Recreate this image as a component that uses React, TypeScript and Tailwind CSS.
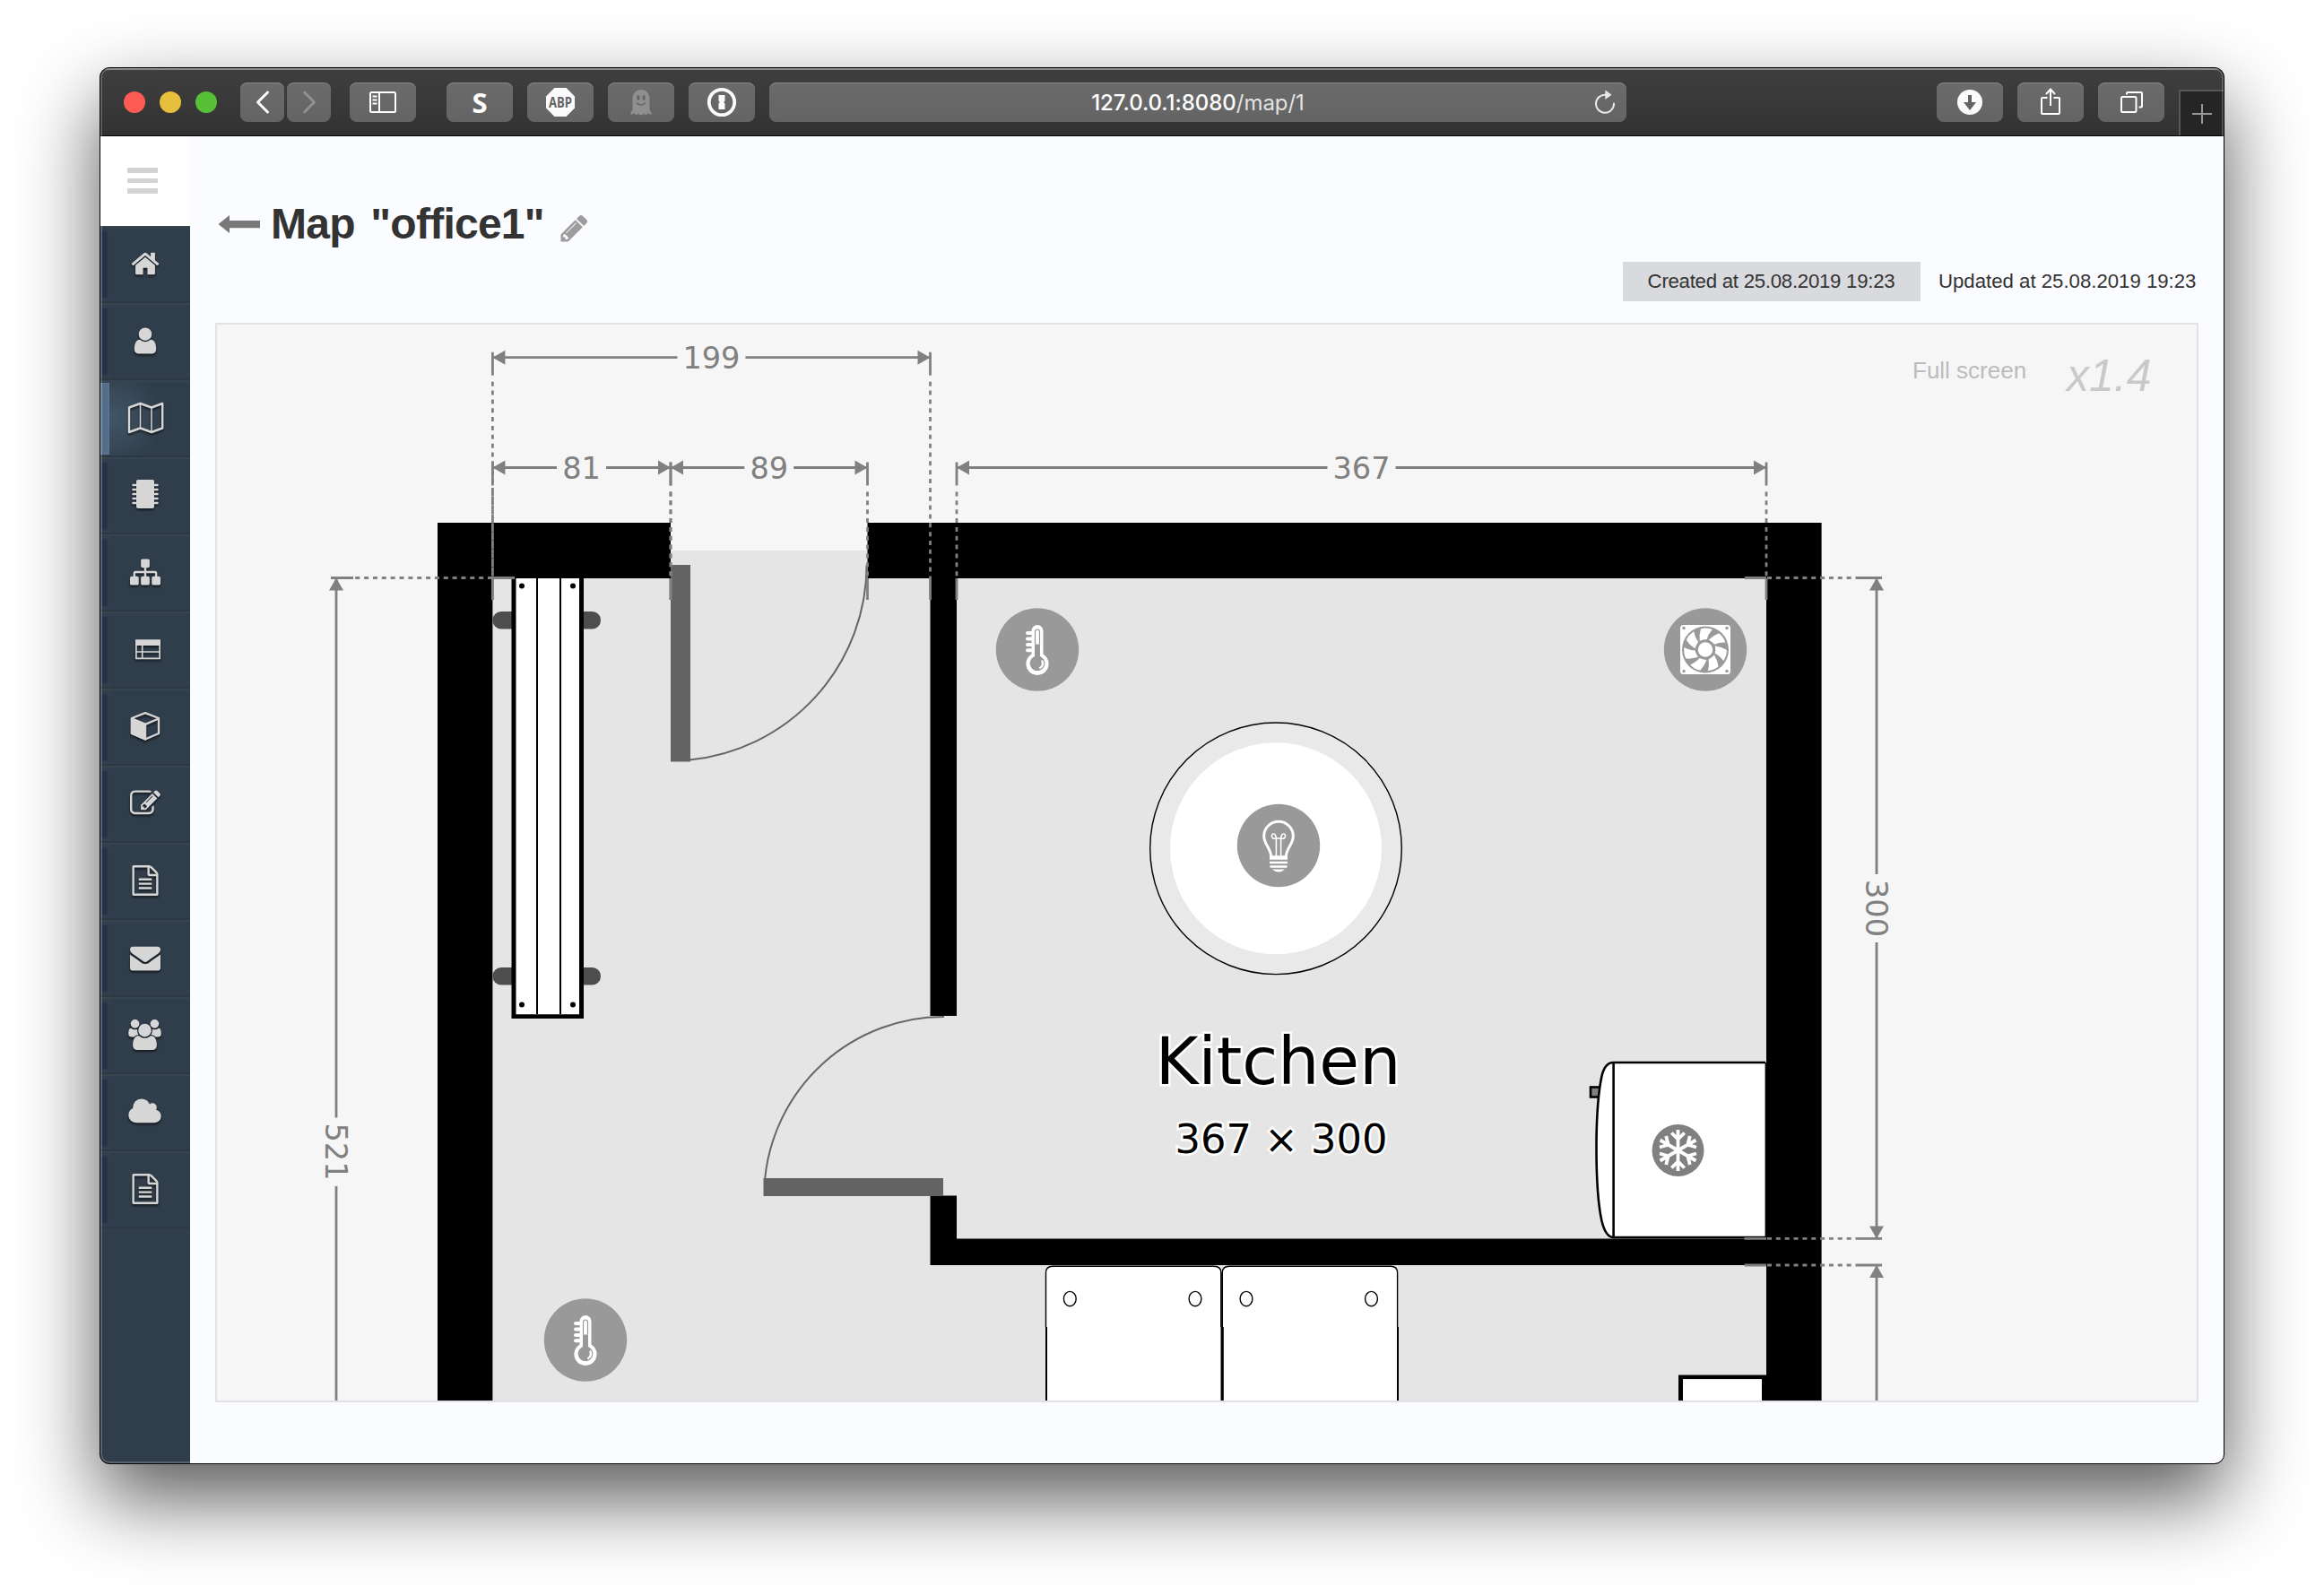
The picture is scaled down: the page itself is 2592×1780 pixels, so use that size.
import React from "react";

const FA = {
  home: "M1472 992v480q0 26-19 45t-45 19h-384v-384h-256v384h-384q-26 0-45-19t-19-45v-480q0-1 .5-3t.5-3l575-474 575 474q1 2 1 6zm223-69l-62 74q-8 9-21 11h-3q-13 0-21-7l-692-577-692 577q-12 8-24 7-13-2-21-11l-62-74q-8-10-7-23.5t11-21.5l719-599q32-26 76-26t76 26l244 204v-195q0-14 9-23t23-9h192q14 0 23 9t9 23v408l219 182q10 8 11 21.5t-7 23.5z",
  user: "M1536 1399q0 109-62.5 187t-150.5 78h-854q-88 0-150.5-78t-62.5-187q0-85 8.5-160.5t31.5-152 58.5-131 94-89 134.5-34.5q131 128 313 128t313-128q76 0 134.5 34.5t94 89 58.5 131 31.5 152 8.5 160.5zm-256-887q0 159-112.5 271.5t-271.5 112.5-271.5-112.5-112.5-271.5 112.5-271.5 271.5-112.5 271.5 112.5 112.5 271.5z",
  sitemap: "M1792 1248v320q0 40-28 68t-68 28h-320q-40 0-68-28t-28-68v-320q0-40 28-68t68-28h96v-192h-512v192h96q40 0 68 28t28 68v320q0 40-28 68t-68 28h-320q-40 0-68-28t-28-68v-320q0-40 28-68t68-28h96v-192h-512v192h96q40 0 68 28t28 68v320q0 40-28 68t-68 28h-320q-40 0-68-28t-28-68v-320q0-40 28-68t68-28h96v-192q0-52 38-90t90-38h512v-192h-96q-40 0-68-28t-28-68v-320q0-40 28-68t68-28h320q40 0 68 28t28 68v320q0 40-28 68t-68 28h-96v192h512q52 0 90 38t38 90v192h96q40 0 68 28t28 68z",
  edit: "M888 1184l116-116-152-152-116 116v56h96v96h56zm440-720q-16-16-33 1l-350 350q-17 17-1 33t33-1l350-350q17-17 1-33zm80 594v190q0 119-84.5 203.5t-203.5 84.5h-832q-119 0-203.5-84.5t-84.5-203.5v-832q0-119 84.5-203.5t203.5-84.5h832q63 0 117 25 15 7 18 23 3 17-9 29l-49 49q-14 14-32 8-23-6-45-6h-832q-66 0-113 47t-47 113v832q0 66 47 113t113 47h832q66 0 113-47t47-113v-126q0-13 9-22l64-64q15-15 35-7t20 29zm-96-738l288 288-672 672h-288v-288zm444 132l-92 92-288-288 92-92q28-28 68-28t68 28l152 152q28 28 28 68t-28 68z",
  file: "M1596 380q28 28 48 76t20 88v1152q0 40-28 68t-68 28h-1344q-40 0-68-28t-28-68v-1600q0-40 28-68t68-28h896q40 0 88 20t76 48zm-444-244v376h376q-10-29-22-41l-313-313q-12-12-41-22zm384 1528v-1024h-416q-40 0-68-28t-28-68v-416h-768v1536h1280zm-1024-864q0-14 9-23t23-9h704q14 0 23 9t9 23v64q0 14-9 23t-23 9h-704q-14 0-23-9t-9-23v-64zm736 224q14 0 23 9t9 23v64q0 14-9 23t-23 9h-704q-14 0-23-9t-9-23v-64q0-14 9-23t23-9h704zm0 256q14 0 23 9t9 23v64q0 14-9 23t-23 9h-704q-14 0-23-9t-9-23v-64q0-14 9-23t23-9h704z",
  mail: "M1792 710v794q0 66-47 113t-113 47h-1472q-66 0-113-47t-47-113v-794q44 49 101 87 362 246 497 345 57 42 92.5 65.5t94.5 48 110 24.5h2q51 0 110-24.5t94.5-48 92.5-65.5q170-123 498-345 57-39 100-87zm0-294q0 79-49 151t-122 123q-376 261-468 325-10 7-42.5 31t-54 38.5-52 32.5-57.5 27-50 9h-2q-23 0-50-9t-57.5-27-52-32.5-54-38.5-42.5-31q-91-64-262-182.5t-205-142.5q-62-42-117-115.5t-55-136.5q0-78 41.5-130t118.5-52h1472q65 0 112.5 47t47.5 113z",
  users: "M657 896q-162 5-265 128h-134q-82 0-138-40.5t-56-118.5q0-353 124-353 6 0 43.5 21t97.5 42.5 119 21.5q67 0 133-23-5 37-5 66 0 139 81 256zm1071 637q0 120-73 189.5t-194 69.5h-874q-121 0-194-69.5t-73-189.5q0-53 3.5-103.5t14-109 26.5-108.5 43-97.5 62-81 85.5-53.5 111.5-20q10 0 43 21.5t73 48 107 48 135 21.5 135-21.5 107-48 73-48 43-21.5q61 0 111.5 20t85.5 53.5 62 81 43 97.5 26.5 108.5 14 109 3.5 103.5zm-1024-1277q0 106-75 181t-181 75-181-75-75-181 75-181 181-75 181 75 75 181zm704 384q0 159-112.5 271.5t-271.5 112.5-271.5-112.5-112.5-271.5 112.5-271.5 271.5-112.5 271.5 112.5 112.5 271.5zm576 225q0 78-56 118.5t-138 40.5h-134q-103-123-265-128 81-117 81-256 0-29-5-66 66 23 133 23 59 0 119-21.5t97.5-42.5 43.5-21q124 0 124 353zm-128-609q0 106-75 181t-181 75-181-75-75-181 75-181 181-75 181 75 75 181z",
  cloud: "M1984 1152q0 159-112.5 271.5t-271.5 112.5h-1088q-185 0-316.5-131.5t-131.5-316.5q0-132 71-241.5t187-163.5q-2-28-2-43 0-212 150-362t362-150q158 0 286.5 88t187.5 230q70-62 166-62 106 0 181 75t75 181q0 75-41 138 129 30 213 134.5t84 239.5z",
  pencil: "M491 1536l91-91-235-235-91 91v107h128v128h107zm523-928q0-22-22-22-10 0-17 7l-542 542q-7 7-7 17 0 22 22 22 10 0 17-7l542-542q7-7 7-17zm-54-192l416 416-832 832h-416v-416zm683 96q0 53-37 90l-166 166-416-416 166-165q36-38 90-38 53 0 91 38l235 234q37 39 37 91z",
};

function Glyph({ d, wide = false }: { d: string; wide?: boolean }) {
  return wide ? (
    <svg className="h-[34px] w-[39px] fill-current" viewBox="0 0 2048 1792">
      <path d={d} />
    </svg>
  ) : (
    <svg className="size-[34px] fill-current" viewBox="0 0 1792 1792">
      <path d={d} />
    </svg>
  );
}

const MapGlyph = () => (
  <svg className="h-[36px] w-[42px]" viewBox="0 0 42 36" fill="none" stroke="currentColor" strokeWidth="2.400" strokeLinejoin="round">
    <path d="M3 6.500 15.500 2 28 6.500 40.200 2V29.500L28 34 15.500 29.500 3 34Z" />
    <path d="M15.500 2V29.500M28 6.500V34" strokeWidth="1.500" />
  </svg>
);

const ChipGlyph = () => (
  <svg className="mb-[2px] h-[34px] w-[30px]" viewBox="0 0 30 34" fill="currentColor">
    <rect x="5" y="1" width="20" height="32" rx="2" />
    {[7, 12, 17, 22, 27].map((y) => (
      <path key={y} d={`M1.500 ${y}H4M26 ${y}h2.500`} stroke="currentColor" strokeWidth="2.400" strokeLinecap="round" />
    ))}
  </svg>
);

const TableGlyph = () => (
  <svg className="ml-[7px] h-[24px] w-[30px]" viewBox="0 0 30 24" fill="none" stroke="currentColor" strokeWidth="1.700">
    <path d="M1 1.500H29V8H1Z" fill="currentColor" stroke="none" />
    <path d="M1.900 2.400H28.100V22.300H1.900ZM2 15H28M8.700 8V22" />
  </svg>
);

const CubeGlyph = () => (
  <svg className="h-[34px] w-[34px]" viewBox="0 0 34 34" fill="none" stroke="currentColor" strokeWidth="2.400" strokeLinejoin="round">
    <path d="M2 8 17 2.200 32 8V25L17 31.500 2 25Z" />
    <path d="M2 8.500 17 14.800 32 8.500" />
    <path d="M2 8.500 17 14.800V31.500L2 25Z" fill="currentColor" />
  </svg>
);

const NAV: { name: string; icon: React.ReactNode }[] = [
  { name: "home", icon: <Glyph d={FA.home} /> },
  { name: "user", icon: <Glyph d={FA.user} /> },
  { name: "map", icon: <MapGlyph /> },
  { name: "chip", icon: <ChipGlyph /> },
  { name: "flow", icon: <Glyph d={FA.sitemap} /> },
  { name: "table", icon: <TableGlyph /> },
  { name: "cube", icon: <CubeGlyph /> },
  { name: "edit", icon: <Glyph d={FA.edit} /> },
  { name: "docs", icon: <Glyph d={FA.file} /> },
  { name: "mail", icon: <Glyph d={FA.mail} /> },
  { name: "users", icon: <Glyph d={FA.users} wide /> },
  { name: "cloud", icon: <Glyph d={FA.cloud} wide /> },
  { name: "logs", icon: <Glyph d={FA.file} /> },
];

function ToolButton({ className = "w-[74px]", children }: { className?: string; children?: React.ReactNode }) {
  return (
    <div
      className={`flex h-[44px] shrink-0 items-center justify-center rounded-[8px] bg-gradient-to-b from-[#6b6b6b] to-[#646464] text-white shadow-[inset_0_1px_0_#858585] ${className}`}
    >
      {children}
    </div>
  );
}

function TitleBar() {
  return (
    <div className="relative flex h-[76px] shrink-0 items-start border-b border-black bg-gradient-to-b from-[#3f3f3f] to-[#323232] pt-[16px] shadow-[inset_0_2px_0_#6f6f6f]">
      <div className="ml-[26px] flex h-[44px] gap-[16px] pt-[10px]">
        <span className="size-6 rounded-full bg-[#ff5b55]" />
        <span className="size-6 rounded-full bg-[#e6bf3c]" />
        <span className="size-6 rounded-full bg-[#58c038]" />
      </div>
      <ToolButton className="ml-[26px] w-[49px]">
        <svg className="h-[28px] w-[18px]" viewBox="0 0 18 28" fill="none" stroke="currentColor" strokeWidth="3" strokeLinecap="round" strokeLinejoin="round">
          <path d="M14.500 3 3.500 14l11 11" />
        </svg>
      </ToolButton>
      <ToolButton className="ml-[3px] w-[49px]">
        <svg className="h-[28px] w-[18px] text-[#939393]" viewBox="0 0 18 28" fill="none" stroke="currentColor" strokeWidth="2.600" strokeLinecap="round" strokeLinejoin="round">
          <path d="m3.500 3 11 11-11 11" />
        </svg>
      </ToolButton>
      <ToolButton className="ml-[21px] w-[74px]">
        <svg className="h-[26px] w-[32px]" viewBox="0 0 32 26" fill="none" stroke="currentColor" strokeWidth="2">
          <rect x="2" y="2" width="28" height="22" rx="1.500" />
          <path d="M12 2V24M4.500 6.500h5M4.500 10.500h5M4.500 14.500h5" />
        </svg>
      </ToolButton>
      <ToolButton className="ml-[34px] w-[74px]">
        <span className="font-['Open_Sans'] text-[31px] leading-none font-bold">S</span>
      </ToolButton>
      <ToolButton className="ml-[16px] w-[74px]">
        <svg className="size-[34px]" viewBox="0 0 34 34">
          <path d="M10.400 1H23.600L33 10.400V23.600L23.600 33H10.400L1 23.600V10.400Z" fill="#fbfbfb" />
          <text x="4" y="22.500" fontSize="15.500" fontWeight="700" fill="#636363" fontFamily="Open Sans" textLength="26" lengthAdjust="spacingAndGlyphs">ABP</text>
        </svg>
      </ToolButton>
      <ToolButton className="ml-[16px] w-[74px]">
        <svg className="h-[30px] w-[26px]" viewBox="0 0 26 30">
          <path d="M13 1c6 0 9.500 4.500 9.500 10.500V23l2.500 5c-2 1.200-3 .2-4.200-1-1.500 2.400-3.300 2.800-4.500.6-1.200 2.400-5.400 2.400-6.600 0-1.200 2.200-3 1.800-4.500-.6C4 28.200 3 29.200 1 28l2.500-5V11.500C3.500 5.500 7 1 13 1Z" fill="#8f8f8f" />
          <ellipse cx="9.900" cy="10" rx="1.600" ry="3" fill="#666" />
          <ellipse cx="16.100" cy="10" rx="1.600" ry="3" fill="#666" />
          <path d="M8 15.500q5 5.500 10 0" fill="none" stroke="#666" strokeWidth="1.700" />
        </svg>
      </ToolButton>
      <ToolButton className="ml-[16px] w-[74px]">
        <svg className="size-[34px]" viewBox="0 0 34 34" fill="none">
          <circle cx="17" cy="17" r="14.200" stroke="#fbfbfb" strokeWidth="3.800" />
          <path d="M13.500 9h7v6.500l-1.400 1.500 1.400 1.500V25h-7v-6.500l1.400-1.500-1.400-1.500Z" fill="#fbfbfb" />
        </svg>
      </ToolButton>
      <ToolButton className="relative ml-[16px] w-[956px] rounded-[7px]">
        <span className="mt-[2px] font-['Inter'] text-[24px] font-medium tracking-[-0.03px] text-white">
          127.0.0.1:8080<span className="font-normal text-[#e2e2e2]">/map/1</span>
        </span>
        <svg className="absolute top-[8px] right-[11px] h-[28px] w-[26px] text-[#e8e8e8]" viewBox="0 0 26 28" fill="none" stroke="currentColor" strokeWidth="2">
          <path d="M14 5.800A10 10 0 1 0 23 15.600" strokeLinecap="round" />
          <path d="M13.300 0.500 20.500 5.800 13.300 11Z" fill="currentColor" stroke="none" />
        </svg>
      </ToolButton>
      <ToolButton className="ml-[346px] w-[74px]">
        <svg className="size-[30px]" viewBox="0 0 30 30">
          <circle cx="15" cy="15" r="14" fill="#fbfbfb" />
          <path d="M13 7h4v8h5l-7 9-7-9h5Z" fill="#636363" />
        </svg>
      </ToolButton>
      <ToolButton className="ml-[16px] w-[74px]">
        <svg className="mb-[2px] h-[32px] w-[24px]" viewBox="0 0 24 32" fill="none" stroke="currentColor" strokeWidth="2">
          <path d="M8.500 12H3a1 1 0 0 0-1 1V29a1 1 0 0 0 1 1H21a1 1 0 0 0 1-1V13a1 1 0 0 0-1-1H15.500M12 21V2.500M7 8l5-5.500L17 8" />
        </svg>
      </ToolButton>
      <ToolButton className="ml-[16px] w-[74px]">
        <svg className="h-[26px] w-[26px]" viewBox="0 0 26 26" fill="none" stroke="currentColor" strokeWidth="2">
          <rect x="2" y="7" width="16.500" height="17" rx="1.500" />
          <path d="M8 4.500V3a1 1 0 0 1 1-1H24a1 1 0 0 1 1 1V17.500a1 1 0 0 1-1 1H21.500" />
        </svg>
      </ToolButton>
      <div className="mt-[8px] ml-[16px] flex h-[51px] min-w-0 flex-1 items-center justify-center border-t-2 border-l-2 border-[#575757] bg-[#252525]">
        <svg className="size-[22px]" viewBox="0 0 22 22" stroke="#979797" strokeWidth="2">
          <path d="M11 0V22M0 11H22" />
        </svg>
      </div>
    </div>
  );
}

function Sidebar() {
  return (
    <nav className="flex w-[100px] shrink-0 flex-col bg-[#303d4a]">
      <div className="flex h-[100px] flex-col gap-[6px] bg-white pt-[35px] pl-[30px]">
        <span className="h-[5.500px] w-[34px] rounded-[1px] bg-[#d3d3d3]" />
        <span className="h-[5.500px] w-[34px] rounded-[1px] bg-[#d3d3d3]" />
        <span className="h-[5.500px] w-[34px] rounded-[1px] bg-[#d3d3d3]" />
      </div>
      {NAV.map(({ name, icon }) => (
        <div
          key={name}
          className={`flex h-[86px] items-center border-t-2 border-b-2 border-t-[#36444f] border-b-[#2c3945] ${
            name === "map" ? "bg-[radial-gradient(circle_at_12px_40px,#415666,#303d4a_58px)]" : ""
          }`}
        >
          <span
            className={`h-[80px] w-[10px] ${
              name === "map" ? "bg-[#546d88] shadow-[inset_0_0_3px_#6c87a0]" : "bg-[#252e46] shadow-[inset_0_0_4px_1px_#3c4c5a]"
            }`}
          />
          <span className="flex w-[79px] items-center justify-center pb-[3px] text-[#d6d6d6] drop-shadow-[0_2px_1px_rgba(0,0,0,0.6)]">{icon}</span>
        </div>
      ))}
    </nav>
  );
}

type Dim = { from: number; to: number; at: number; wall: number; label: string; gap: number; mid?: number };

const TOP_DIMS: Dim[] = [
  { from: 549.4, to: 1037.5, at: 398.7, wall: 645, label: "199", gap: 76 },
  { from: 549.4, to: 748, at: 521.5, wall: 645, label: "81", gap: 55, mid: 648.5 },
  { from: 748, to: 967.5, at: 521.5, wall: 645, label: "89", gap: 55 },
  { from: 1067, to: 1970, at: 521.5, wall: 645, label: "367", gap: 76 },
];

function HorizontalDim({ from, to, at, wall, label, gap, mid }: Dim) {
  const m = mid ?? (from + to) / 2;
  return (
    <g stroke="#808080" strokeWidth="2.800" fill="none">
      <path d={`M${from} ${at}H${m - gap / 2}M${m + gap / 2} ${at}H${to}`} />
      <path d={`M${from} ${at}l14 -8v16ZM${to} ${at}l-14 -8v16Z`} fill="#808080" stroke="none" />
      {[from, to].map((x) => (
        <g key={x}>
          <path d={`M${x} ${at - 6}V${at + 20}M${x} ${wall}V${wall + 24}`} />
          <path d={`M${x} ${at + 27}V${wall}`} strokeDasharray="5 4.850" />
        </g>
      ))}
      <text x={m} y={at + 12} textAnchor="middle" fontSize="33.600" fill="#808080" stroke="none">{label}</text>
    </g>
  );
}

function Thermometer({ x, y }: { x: number; y: number }) {
  return (
    <g transform={`translate(${x} ${y})`}>
      <circle r="46.200" fill="#999" />
      <path d="M-6.500 -21a6.500 6.500 0 0 1 13 0V5a12.600 12.600 0 1 1 -13 0Z" fill="#fff" />
      <path d="M-6 -18.500h-5M-6 -12h-5M-6 -5.500h-5M-6 .8h-5" stroke="#fff" strokeWidth="4" strokeLinecap="round" />
      <path d="M-2.500 -6V-20a2.500 2.500 0 0 1 5 0V-6" fill="none" stroke="#999" strokeWidth="1.200" />
      <path d="M-3 -6h6V7.500a8.300 8.300 0 1 1 -6 0Z" fill="#999" />
      <path d="M5.500 13q1.600 4.800-2.300 7.300" fill="none" stroke="#fff" strokeWidth="2.400" strokeLinecap="round" />
    </g>
  );
}

function Fan({ x, y }: { x: number; y: number }) {
  return (
    <g transform={`translate(${x} ${y})`}>
      <circle r="46.200" fill="#999" />
      <rect x="-28" y="-27.500" width="56" height="55" rx="3.500" fill="#fff" />
      {[[-24, -24], [24, -24], [-24, 24], [24, 24]].map(([cx, cy]) => (
        <circle key={`${cx}${cy}`} cx={cx} cy={cy} r="1.700" fill="#999" />
      ))}
      <circle r="26" fill="#999" />
      {[0, 1, 2, 3, 4, 5, 6].map((i) => (
        <path key={i} d="M-6.300 -9.800Q-7 -17 -5 -23.200Q1 -25 7.800 -22.500Q3 -17 1.800 -11.500Q-2 -11.500 -6.300 -9.800Z" fill="#fff" transform={`rotate(${(i * 360) / 7})`} />
      ))}
      <circle r="8.200" fill="#fff" />
    </g>
  );
}

function Bulb({ x, y }: { x: number; y: number }) {
  return (
    <g transform={`translate(${x} ${y})`} fill="none" stroke="#fff">
      <circle r="46.200" fill="#999" stroke="none" />
      <path d="M-8.300 12C-9 2-16.300-1-16.300-10.500a16.300 16.300 0 0 1 32.600 0C16.300-1 9 2 8.300 12" strokeWidth="3" />
      <path d="M-2.600 12V-6C-2.600-11-4-13.500-6-13-9-12-7.500-6.500-3.500-8H3.500C7.500-6.500 9-12 6-13 4-13.500 2.600-11 2.600-6V12" strokeWidth="1.600" />
      <path d="M-10 13.500H10" strokeWidth="4.500" />
      <path d="M-10 19H10M-9.500 23.500H9.500" strokeWidth="2.600" />
      <path d="M-7 26.500H7Q4 29.500 0 29.500T-7 26.500Z" fill="#fff" stroke="none" />
    </g>
  );
}

function Snowflake({ x, y }: { x: number; y: number }) {
  return (
    <g transform={`translate(${x} ${y})`} stroke="#fff" strokeWidth="3.800" fill="none">
      <circle r="29" fill="#808080" stroke="none" />
      {[0, 60, 120, 180, 240, 300].map((a) => (
        <path key={a} d="M0 0V-23M-7.200 -19.500 0 -12.500 7.200 -19.500" transform={`rotate(${a})`} />
      ))}
    </g>
  );
}

function FloorPlan() {
  return (
    <svg className="block h-full w-full font-['DejaVu_Sans']" viewBox="242 362 2208 1200">
      <path d="M549 645H748V614H967.500V645H1970V1562H549Z" fill="#e5e5e5" />

      {/* walls */}
      <g fill="#000">
        <path d="M488 583H748V645H549.400V1562H488Z" />
        <path d="M967.500 583H2031.600V1562H1970V645H1067V1133H1037.500V645H967.500Z" />
        <path d="M1037.500 1333.500H1067V1381.500H1970V1411H1037.500Z" />
      </g>

      {/* hallway bench */}
      <g>
        <g fill="#4d4d4d">
          <rect x="549.500" y="682" width="120.500" height="19.500" rx="9.500" />
          <rect x="549.500" y="1079" width="120.500" height="19.500" rx="9.500" />
        </g>
        <path d="M570.500 645H651V1136H570.500Z" />
        <path d="M575.500 645H646V1131.300H575.500Z" fill="#fff" />
        <path d="M599 645V1131M625 645V1131" stroke="#000" strokeWidth="2" />
        <circle cx="582" cy="653.500" r="3" />
        <circle cx="639" cy="653.500" r="3" />
        <circle cx="582" cy="1120.500" r="3" />
        <circle cx="639" cy="1120.500" r="3" />
      </g>

      {/* doors */}
      <g fill="none" stroke="#666" strokeWidth="2">
        <path d="M966.600 630A218.600 218.600 0 0 1 769 847.500" />
        <rect x="748" y="630" width="22" height="219.500" fill="#636363" stroke="none" />
        <path d="M1053 1134A200.500 200.500 0 0 0 853 1316" />
        <rect x="851.500" y="1314" width="200.500" height="20" fill="#636363" stroke="none" />
      </g>

      {/* ceiling lamp */}
      <circle cx="1423" cy="946.300" r="140.300" fill="#e9e9e9" stroke="#000" strokeWidth="1.400" />
      <circle cx="1423" cy="946.300" r="118" fill="#fff" />

      {/* fridge */}
      <g stroke="#000" strokeWidth="2.600">
        <rect x="1774" y="1212.500" width="12" height="11" fill="#808080" />
        <path d="M1969 1185H1799.500Q1790 1185 1786.500 1200Q1780.500 1228 1780.500 1280Q1780.500 1335 1786.500 1362Q1791 1380 1799.500 1380H1969" fill="#fff" />
        <path d="M1799.600 1185V1380" />
        <path d="M1969.300 1185V1380" strokeWidth="1.400" />
      </g>
      <Snowflake x={1871.5} y={1283} />

      {/* cabinets below the kitchen */}
      <g fill="#fff" stroke="#000" strokeWidth="1.400">
        <path d="M1166.500 1480V1419.500Q1166.500 1412.300 1174 1412.300H1354Q1361.800 1412.300 1361.800 1419.500V1480M1363.300 1480V1419.500Q1363.300 1412.300 1371 1412.300H1551Q1558.600 1412.300 1558.600 1419.500V1480" />
        <path d="M1167 1480V1564H1362.500V1480M1363.800 1480V1564H1559V1480" strokeWidth="2" />
        {[1193.3, 1333, 1390, 1529.5].map((cx) => (
          <ellipse key={cx} cx={cx} cy="1448.600" rx="6.900" ry="8.200" />
        ))}
      </g>
      <path d="M1872 1533.500H1970V1562H1965V1538.300H1877V1562H1872Z" />
      <path d="M1877 1538.300H1965V1562H1877Z" fill="#fff" />

      {/* dimensions */}
      {TOP_DIMS.map((d) => (
        <HorizontalDim key={d.label} {...d} />
      ))}
      <g stroke="#808080" strokeWidth="2.800" fill="none">
        <path d="M375 645V1246.500M375 1323V1562M2093 645V975M2093 1051V1381.500M2093 1411V1562" />
        <path d="M375 644.500l-8 14h16ZM2093 644.500l-8 14h16ZM2093 1381.500l-8 -14h16ZM2093 1411l-8 14h16Z" fill="#808080" stroke="none" />
        <path d="M369 644.500H394M549 644.500H574M1946 644.500H1970M2074 644.500H2099M1945.500 1381.300H1970M2071 1381.300H2099M1945.500 1411H1970M2071 1411H2099" />
        <path d="M549 644.500H394M1971 644.500H2074M1971 1381.300H2071M1971 1411H2071" strokeDasharray="5 4.850" />
      </g>
      <g fill="#808080" fontSize="33.600" textAnchor="middle">
        <text transform="translate(363 1284.500) rotate(90)">521</text>
        <text transform="translate(2081 1013) rotate(90)">300</text>
      </g>

      {/* devices */}
      <Thermometer x={1157} y={724.5} />
      <Thermometer x={653} y={1494.5} />
      <Fan x={1902} y={724.5} />
      <Bulb x={1426} y={943} />

      {/* room name */}
      <g textAnchor="middle" fill="#000" stroke="#fff" strokeWidth="5" paintOrder="stroke">
        <text x="1425.500" y="1209" fontSize="72.800">Kitchen</text>
        <text x="1429" y="1286" fontSize="44.800">367 × 300</text>
      </g>
    </svg>
  );
}

function MapPage() {
  return (
    <main className="flex min-w-0 flex-1 flex-col bg-[#fbfcff] px-[28px] font-['Liberation_Sans'] text-[#333]">
      <header className="mt-[64px] flex h-[68px] items-center">
        <svg className="ml-[3px] h-[22px] w-[48px]" viewBox="0 0 48 22" fill="#787878">
          <path d="M0.500 11 13 1V7H47V15.300H13V21Z" />
        </svg>
        <h1 className="ml-[11px] text-[48px] leading-none font-bold tracking-[-0.75px] whitespace-nowrap [word-spacing:5px]">Map "office1"</h1>
        <svg className="mt-[8px] ml-[16px] h-[35px] w-[35px]" viewBox="0 0 1792 1792" fill="#9d9d9d">
          <path d={FA.pencil} />
        </svg>
      </header>
      <div className="mt-[8px] flex h-[44px] items-center justify-end text-[22.200px] leading-none whitespace-nowrap">
        <span className="flex h-[44px] w-[332px] items-center justify-center bg-[#d9dade]">
          <span className="-ml-[1px] tracking-[-0.25px]">Created at 25.08.2019 19:23</span>
        </span>
        <span className="ml-[20px] w-[290px]">Updated at 25.08.2019 19:23</span>
      </div>
      <section className="relative mt-[24px] h-[1204px] border-2 border-[#e1e2e1] bg-[#f6f6f6]">
        <FloorPlan />
        <span className="absolute top-[36px] left-[1891px] text-[26px] leading-[30px] text-[#bcbcbc]">Full screen</span>
        <span className="absolute top-[28px] left-[2063px] text-[50px] leading-[58px] text-[#c9c9c9] italic">x1.4</span>
      </section>
    </main>
  );
}

export default function App() {
  return (
    <div className="h-[1780px] w-[2592px] overflow-hidden bg-white pt-[75px] pl-[111px]">
      <div className="relative flex h-[1558px] w-[2370px] flex-col overflow-hidden rounded-[11px] border border-black bg-black shadow-[0_38px_88px_rgba(0,0,0,0.66)]">
        <TitleBar />
        <div className="flex min-h-0 flex-1">
          <Sidebar />
          <MapPage />
        </div>
        <div className="pointer-events-none absolute inset-0 rounded-[10px] shadow-[inset_0_0_0_2px_rgba(255,255,255,0.2)]" />
      </div>
    </div>
  );
}
